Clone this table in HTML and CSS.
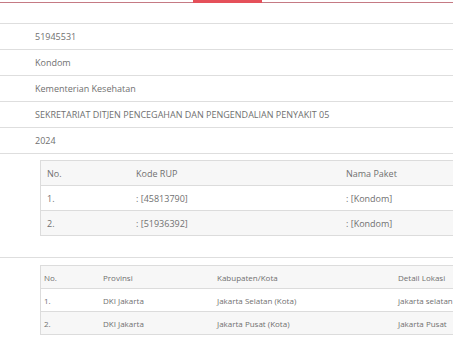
FILE: index.html
```html
<!DOCTYPE html>
<html lang="id">
<head>
    <meta charset="UTF-8">
    <meta name="viewport" content="width=device-width, initial-scale=1.0">
    <title>Detail Paket</title>
    <link rel="stylesheet" href="styles.css">
</head>
<body>
    <div class="tabs">
        <span class="tab-active"></span>
    </div>

    <div class="detail">
        <div class="row">51945531</div>
        <div class="row">Kondom</div>
        <div class="row">Kementerian Kesehatan</div>
        <div class="row">SEKRETARIAT DITJEN PENCEGAHAN DAN PENGENDALIAN PENYAKIT 05</div>
        <div class="row">2024</div>
        <div class="row row-table">
            <table class="grid grid-paket">
                <thead>
                    <tr><th>No.</th><th>Kode RUP</th><th>Nama Paket</th></tr>
                </thead>
                <tbody>
                    <tr><td>1.</td><td>: [45813790]</td><td>: [Kondom]</td></tr>
                    <tr><td>2.</td><td>: [51936392]</td><td>: [Kondom]</td></tr>
                </tbody>
            </table>
        </div>
        <div class="row row-table row-last">
            <table class="grid grid-lokasi">
                <thead>
                    <tr><th>No.</th><th>Provinsi</th><th>Kabupaten/Kota</th><th>Detail Lokasi</th></tr>
                </thead>
                <tbody>
                    <tr><td>1.</td><td>DKI Jakarta</td><td>Jakarta Selatan (Kota)</td><td>jakarta selatan</td></tr>
                    <tr><td>2.</td><td>DKI Jakarta</td><td>Jakarta Pusat (Kota)</td><td>Jakarta Pusat</td></tr>
                </tbody>
            </table>
        </div>
    </div>
</body>
</html>
```

FILE: styles.css
```css
/* Base */
body {
    margin: 0;
    font-family: 'Open Sans', sans-serif;
    font-size: 9px;
    color: #707070;
    background-color: #fff;
    overflow: hidden;
}

/* Tab strip */
.tabs {
    height: 2px;
    border-bottom: 1px solid #c57a84;
    position: relative;
}

.tab-active {
    position: absolute;
    left: 193px;
    top: 0;
    width: 69px;
    height: 3px;
    background-color: #e5505a;
}

/* Detail rows */
.detail {
    margin-top: 20px;
}

.row {
    border-top: 1px solid #dedede;
    height: 25px;
    line-height: 25px;
    padding-left: 35px;
    white-space: nowrap;
}

.row-table {
    height: auto;
    line-height: normal;
    padding: 6px 0 21px 40px;
}

.row-last {
    padding: 7px 0 0 40px;
}

/* Inner tables */
.grid {
    border-collapse: collapse;
    border: 1px solid #dcdcdc;
    table-layout: fixed;
    white-space: nowrap;
}

.grid th,
.grid td {
    text-align: left;
    font-weight: normal;
    border-top: 1px solid #dcdcdc;
    overflow: hidden;
}

.grid thead tr,
.grid tbody tr:nth-child(even) {
    background-color: #f7f7f7;
}

.grid-paket {
    width: 520px;
}

.grid-paket th,
.grid-paket td {
    height: 24px;
    padding: 0 6px;
}

.grid-paket th:nth-child(1) { width: 77px; }
.grid-paket th:nth-child(2) { width: 198px; }

.grid-lokasi {
    width: 520px;
    font-size: 8px;
}

.grid-lokasi th,
.grid-lokasi td {
    height: 22px;
    padding: 0 3px;
}

.grid-lokasi th:nth-child(1) { width: 53px; }
.grid-lokasi th:nth-child(2) { width: 108px; }
.grid-lokasi th:nth-child(3) { width: 175px; }
```
